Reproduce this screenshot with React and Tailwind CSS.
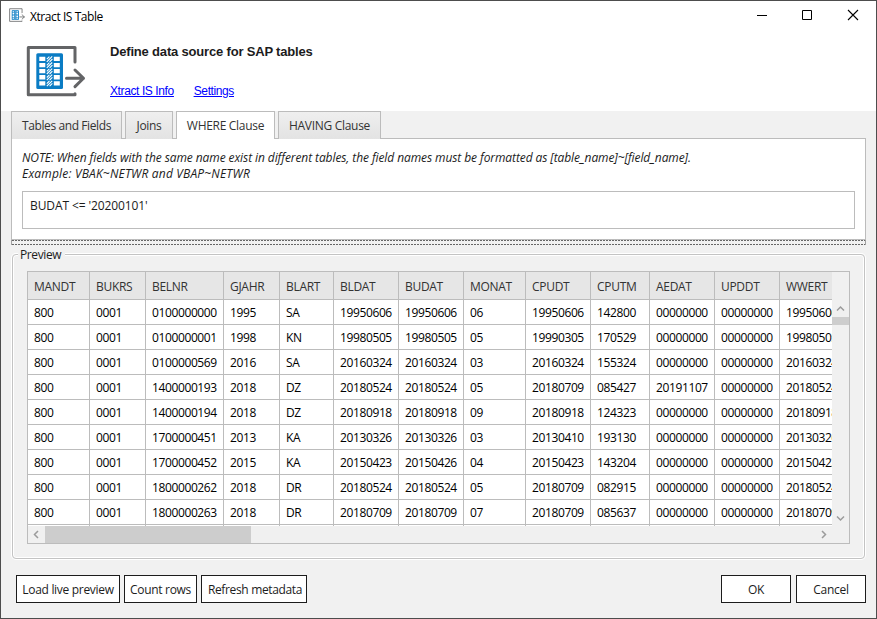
const columns = [
  ["MANDT", "w-[62px]"],
  ["BUKRS", "w-[56px]"],
  ["BELNR", "w-[78px]"],
  ["GJAHR", "w-[56px]"],
  ["BLART", "w-[54px]"],
  ["BLDAT", "w-[65px]"],
  ["BUDAT", "w-[65px]"],
  ["MONAT", "w-[62px]"],
  ["CPUDT", "w-[65px]"],
  ["CPUTM", "w-[59px]"],
  ["AEDAT", "w-[65px]"],
  ["UPDDT", "w-[65px]"],
  ["WWERT", "w-[65px]"],
];

const rows = [
  ["800", "0001", "0100000000", "1995", "SA", "19950606", "19950606", "06", "19950606", "142800", "00000000", "00000000", "19950606"],
  ["800", "0001", "0100000001", "1998", "KN", "19980505", "19980505", "05", "19990305", "170529", "00000000", "00000000", "19980505"],
  ["800", "0001", "0100000569", "2016", "SA", "20160324", "20160324", "03", "20160324", "155324", "00000000", "00000000", "20160324"],
  ["800", "0001", "1400000193", "2018", "DZ", "20180524", "20180524", "05", "20180709", "085427", "20191107", "00000000", "20180524"],
  ["800", "0001", "1400000194", "2018", "DZ", "20180918", "20180918", "09", "20180918", "124323", "00000000", "00000000", "20180918"],
  ["800", "0001", "1700000451", "2013", "KA", "20130326", "20130326", "03", "20130410", "193130", "00000000", "00000000", "20130326"],
  ["800", "0001", "1700000452", "2015", "KA", "20150423", "20150426", "04", "20150423", "143204", "00000000", "00000000", "20150423"],
  ["800", "0001", "1800000262", "2018", "DR", "20180524", "20180524", "05", "20180709", "082915", "00000000", "00000000", "20180524"],
  ["800", "0001", "1800000263", "2018", "DR", "20180709", "20180709", "07", "20180709", "085637", "00000000", "00000000", "20180709"],
];

const logoRows = [11.8, 17.9, 24, 30.1, 36.2];

function Logo({ className }) {
  return (
    <svg viewBox="0 0 60 52" className={className} fill="none">
      <g stroke="#636466" strokeWidth="3" strokeLinecap="round" strokeLinejoin="round">
        <path d="M49 17V2.500H2.300v47.300H49v-1" />
        <path d="M40.500 33.300H57.500M49 25l8.500 8.300L49 41.600" />
      </g>
      <rect x="10.300" y="8.300" width="26.700" height="35.700" rx="1.500" fill="#0a7cc4" />
      {logoRows.map((y) => (
        <g key={y}>
          <path d={`M13.300 ${y}h6v4.300h-6zM27.800 ${y}h6v4.300h-6z`} fill="#fff" />
          <path d={`M20.800 ${y + 2.4}l2.600-2.600M20.800 ${y + 5}l5.400-5.400M23.600 ${y + 5}l2.800-2.800`} stroke="#fff" strokeWidth="1.100" />
        </g>
      ))}
    </svg>
  );
}

function Chevron({ d }) {
  return (
    <svg width="9" height="9" viewBox="0 0 9 9" fill="none">
      <path d={d} stroke="#9b9b9b" strokeWidth="1.500" />
    </svg>
  );
}

function Tab({ children, className }) {
  return (
    <div className={`flex h-7 shrink-0 items-center justify-center border border-b-0 border-[#bcbcbc] ${className}`}>
      {children}
    </div>
  );
}

function Button({ children, className }) {
  return (
    <button className={`flex h-7 items-center justify-center border border-[#1c1c1c] bg-white pt-px whitespace-nowrap ${className}`}>
      {children}
    </button>
  );
}

const idleTab = "bg-linear-to-b from-[#efefef] to-[#e3e3e3]";
const dashes = "h-px bg-[repeating-linear-gradient(90deg,#666_0_2px,transparent_2px_3px)]";

export default function App() {
  return (
    <div className="flex h-[619px] w-[877px] flex-col overflow-hidden border border-[#4d4d4d] bg-[#f1f1f1] font-['Open_Sans',sans-serif] text-[12px] leading-4 tracking-[-0.3px] text-[#1c1c1c]">
      <header className="h-[110px] shrink-0 bg-white">
        <div className="flex h-7 items-center pl-2">
          <Logo className="h-[14px] w-4" />
          <span className="pt-[3px] pl-[5px] tracking-[-0.43px] text-black">Xtract IS Table</span>
          <svg className="ml-auto mr-4" width="103" height="12" viewBox="0 0 103 12" fill="none" stroke="#000">
            <path d="M0 6.500h10M45.500 1.500h9v9h-9z" />
            <path d="M91 1l10 10M101 1l-10 10" strokeWidth="1.100" />
          </svg>
        </div>
        <div className="flex pl-[25px] pt-4">
          <Logo className="h-[52px] w-[60px]" />
          <div className="pl-6 font-['Liberation_Sans',Arial,sans-serif]">
            <h1 className="-mt-px text-[13px] font-bold tracking-[-0.18px]">Define data source for SAP tables</h1>
            <div className="flex gap-5 pt-[23px] text-[12px] tracking-[-0.4px] text-[#0000ff] underline">
              <a>Xtract IS Info</a>
              <a>Settings</a>
            </div>
          </div>
        </div>
      </header>

      <nav className="z-10 -mb-px flex h-7 shrink-0 gap-[3px] pl-2.5 text-[#333]">
        <Tab className={`w-[111px] border-b tracking-[-0.4px] ${idleTab}`}>Tables and Fields</Tab>
        <Tab className={`w-12 border-b ${idleTab}`}>Joins</Tab>
        <Tab className="w-[99px] bg-white">WHERE Clause</Tab>
        <Tab className={`w-[103px] border-b ${idleTab}`}>HAVING Clause</Tab>
      </nav>

      <section className="mx-2.5 h-[102px] shrink-0 border border-[#bcbcbc] bg-white px-2.5 pt-[11px]">
        <p className="tracking-[-0.09px] whitespace-nowrap italic">
          NOTE: When fields with the same name exist in different tables, the field names must be formatted as [table_name]~[field_name].
        </p>
        <p className="tracking-[0.18px] italic">Example: VBAK~NETWR and VBAP~NETWR</p>
        <div className="mt-[9px] h-[38px] border border-[#bcbcbc] px-[7px] pt-1.5 tracking-[-0.1px]">BUDAT &lt;= '20200101'</div>
      </section>

      <div className="mx-2.5 flex h-[5px] shrink-0 flex-col justify-between border-x border-[#a0a0a0]">
        <div className={dashes} />
        <div className={dashes} />
      </div>

      <section className="relative mx-[11px] mt-[9px] h-[305px] shrink-0 rounded-[4px] border border-[#c3c3c3] pl-3.5 pt-4 shadow-[0_0_0_1px_#fff,inset_0_0_0_1px_#fff]">
        <span className="absolute -top-[9px] left-[5px] bg-[#f1f1f1] pr-1 pl-0.5 pt-px tracking-[-0.4px]">Preview</span>
        <div className="h-[273px] w-[823px] border border-[#bcbcbc] bg-[#f0f0f0]">
          <div className="flex h-[254px]">
            <div className="w-[804px] overflow-hidden bg-white">
              <div className="flex w-[817px] bg-[#e6e6e6] text-[#333]">
                {columns.map(([name, width]) => (
                  <div key={name} className={`h-7 shrink-0 border-r border-b border-[#bcbcbc] pl-1.5 pt-[7px] ${width}`}>
                    {name}
                  </div>
                ))}
              </div>
              {rows.map((row, r) => (
                <div key={r} className="flex w-[817px] tracking-[-0.38px] text-black">
                  {row.map((value, c) => (
                    <div key={c} className={`h-[25px] shrink-0 border-r border-b border-[#bcbcbc] pl-1.5 pt-[5px] ${columns[c][1]}`}>
                      {value}
                    </div>
                  ))}
                </div>
              ))}
              <div className="flex h-px w-[817px]">
                {columns.map(([name, width]) => (
                  <div key={name} className={`shrink-0 border-r border-[#bcbcbc] ${width}`} />
                ))}
              </div>
            </div>
            <div className="flex w-[17px] flex-col items-center pt-8">
              <Chevron d="M1 6.500l3.500-3.500 3.500 3.500" />
              <div className="mt-1 h-2 w-full bg-[#cdcdcd]" />
              <div className="mt-auto pb-[3px]">
                <Chevron d="M1 2.500l3.500 3.500 3.500-3.500" />
              </div>
            </div>
          </div>
          <div className="flex h-[17px] items-center">
            <div className="flex w-[17px] justify-center">
              <Chevron d="M6 1l-3.500 3.500 3.500 3.500" />
            </div>
            <div className="h-full w-[206px] bg-[#cdcdcd]" />
            <div className="ml-auto mr-[21px]">
              <Chevron d="M3 1l3.500 3.500-3.500 3.500" />
            </div>
          </div>
        </div>
      </section>

      <footer className="flex px-2.5 pt-4">
        <Button className="ml-[5px] w-[104px]">Load live preview</Button>
        <Button className="ml-1 w-[73px]">Count rows</Button>
        <Button className="ml-1 w-[106px] pl-0.5 tracking-[-0.35px]">Refresh metadata</Button>
        <Button className="ml-auto w-[70px]">OK</Button>
        <Button className="ml-[5px] w-[70px]">Cancel</Button>
      </footer>
    </div>
  );
}
